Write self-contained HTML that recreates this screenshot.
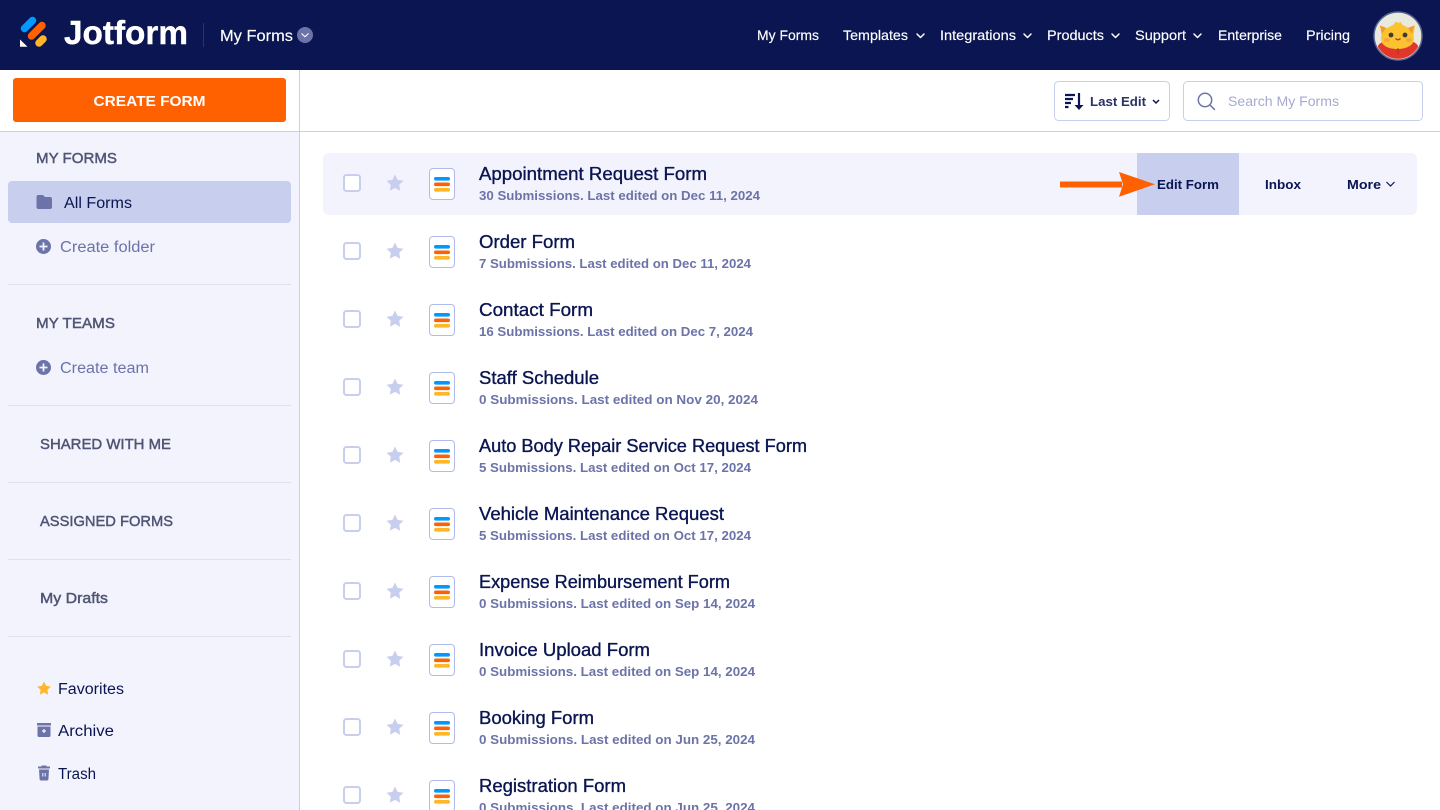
<!DOCTYPE html>
<html lang="en"><head><meta charset="utf-8"><title>My Forms</title>
<style>
html,body{margin:0;padding:0;width:1440px;height:810px;overflow:hidden;background:#fff}
svg{display:block;font-family:"Liberation Sans",sans-serif}
.t{font-size:18px;fill:#0a1551;stroke:#0a1551;stroke-width:.35}
.s{font-size:13px;fill:#6c73a8;font-weight:bold}
.n{font-size:14px;fill:#fff;stroke:#fff;stroke-width:.15}
.h{font-size:15px;fill:#4f5573;stroke:#4f5573;stroke-width:.45}
.l{font-size:15.5px;fill:#0a1551}
.c{font-size:15.5px;fill:#6c73a8}
.a{font-size:13px;fill:#0a1551;font-weight:bold}
.d{fill:none;stroke:#fff;stroke-width:1.5;stroke-linecap:round;stroke-linejoin:round}
</style></head><body>
<svg width="1440" height="810" viewBox="0 0 1440 810" xmlns="http://www.w3.org/2000/svg">
<defs>
<g id="i">
<rect x="344" y="175" width="16" height="16" rx="2.5" fill="#fff" stroke="#c8ceed" stroke-width="2"/>
<path d="M395 174.500l2.600 5.400 5.900.8-4.300 4.100 1 5.900-5.200-2.800-5.200 2.800 1-5.900-4.300-4.100 5.900-.8z" fill="#c8ceed"/>
<rect x="429.500" y="168.500" width="25" height="31" rx="3.500" fill="#fff" stroke="#b1bbe9"/>
<rect x="434" y="177" width="16" height="3.600" rx="1.800" fill="#0099ff"/>
<rect x="434" y="182.500" width="16" height="3.600" rx="1.800" fill="#ff6100"/>
<rect x="434" y="188" width="16" height="3.600" rx="1.800" fill="#ffb629"/>
</g>
</defs>

<!-- top bar -->
<rect width="1440" height="70" fill="#0a1551"/>
<path d="M24.500 28.500L32.500 20.500" stroke="#0099ff" stroke-width="7.500" stroke-linecap="round"/>
<path d="M31.500 36L42 25.500" stroke="#ff6100" stroke-width="7.500" stroke-linecap="round"/>
<path d="M39 43L43 39" stroke="#ffb629" stroke-width="7.500" stroke-linecap="round"/>
<path d="M20 39.500v7.200h7.500z" fill="#fff"/>
<text x="64" y="44" font-size="33" font-weight="bold" fill="#fff" stroke="#fff" stroke-width=".4" textLength="124" lengthAdjust="spacingAndGlyphs">Jotform</text>
<rect x="203" y="23" width="1" height="24" fill="#2a3570"/>
<text x="220" y="41" font-size="15.5" fill="#fff" stroke="#fff" stroke-width=".15" textLength="73" lengthAdjust="spacingAndGlyphs">My Forms</text>
<circle cx="305" cy="35" r="8" fill="#6c73a8"/>
<path d="M301.500 33.500l3.500 3.300 3.500-3.300" fill="none" stroke="#fff" stroke-width="1.100"/>
<text x="757" y="40" class="n" textLength="62" lengthAdjust="spacingAndGlyphs">My Forms</text>
<text x="843" y="40" class="n" textLength="65" lengthAdjust="spacingAndGlyphs">Templates</text>
<path class="d" d="M917 34l3.500 3.500 3.500-3.500"/>
<text x="940" y="40" class="n" textLength="76" lengthAdjust="spacingAndGlyphs">Integrations</text>
<path class="d" d="M1024 34l3.500 3.500 3.500-3.500"/>
<text x="1047" y="40" class="n" textLength="57" lengthAdjust="spacingAndGlyphs">Products</text>
<path class="d" d="M1112 34l3.500 3.500 3.500-3.500"/>
<text x="1135" y="40" class="n" textLength="51" lengthAdjust="spacingAndGlyphs">Support</text>
<path class="d" d="M1194 34l3.500 3.500 3.500-3.500"/>
<text x="1218" y="40" class="n" textLength="64" lengthAdjust="spacingAndGlyphs">Enterprise</text>
<text x="1306" y="40" class="n" textLength="44" lengthAdjust="spacingAndGlyphs">Pricing</text>

<!-- avatar -->
<circle cx="1398" cy="36" r="24" fill="#e9eadf" stroke="#5a638f" stroke-width="1.500"/>
<clipPath id="av"><circle cx="1398" cy="36" r="22.800"/></clipPath>
<g clip-path="url(#av)">
<path d="M1376 62l2-16c1-3 6-5 12-6h16c6 1 11 3 12 6l2 16z" fill="#e0362c"/>
<path d="M1380 25.500l7 2.500 6-3 3-3.500 2 1.500 2.500-1 2 3 6.500 3 6-2.500-1.500 9c1 5 0 9-3 11-4 2.500-8 3.500-13 3.500s-10-1-13-3.500c-3-2-4-6-3-11z" fill="#fcc230"/>
<path d="M1380 25.500l6 2.500-4 6z M1414 25.500l-6 2.500 4 6z" fill="#f39a2e"/>
<circle cx="1391" cy="35" r="2.400" fill="#3d3b33"/><circle cx="1405" cy="35" r="2.400" fill="#3d3b33"/>
<ellipse cx="1387" cy="40" rx="3" ry="2" fill="#f6a63f"/><ellipse cx="1409" cy="40" rx="3" ry="2" fill="#f6a63f"/>
<path d="M1395.500 38.500q2.500 2.500 5 0" fill="none" stroke="#9c4a1a" stroke-width="1.300"/>
<path d="M1398 48v6" stroke="#b32a22" stroke-width="1"/>
</g>

<!-- sidebar -->
<rect x="0" y="70" width="300" height="740" fill="#fff"/>
<rect x="0" y="132" width="299" height="678" fill="#f3f3fe"/>
<rect x="299" y="70" width="1" height="740" fill="#c8ceed"/>
<rect x="300" y="131" width="1140" height="1" fill="#c8ceed"/>
<rect x="0" y="131" width="300" height="1" fill="#c8ceed"/>
<rect x="13" y="78" width="273" height="44" rx="3" fill="#ff6100"/>
<text x="149.500" y="106" font-size="15" font-weight="bold" fill="#fff" text-anchor="middle" textLength="112" lengthAdjust="spacingAndGlyphs">CREATE FORM</text>

<text x="36" y="163" class="h" textLength="81" lengthAdjust="spacingAndGlyphs">MY FORMS</text>
<rect x="8" y="181" width="283" height="42" rx="4" fill="#c8ceed"/>
<path d="M36.500 197a2 2 0 0 1 2-2h4.500l2 2h5a2 2 0 0 1 2 2v8a2 2 0 0 1-2 2h-11.500a2 2 0 0 1-2-2z" fill="#6c73a8"/>
<text x="64" y="208" class="l" textLength="68" lengthAdjust="spacingAndGlyphs">All Forms</text>
<circle cx="43.500" cy="246.500" r="7.500" fill="#6c73a8"/>
<path d="M39.500 246.500h8M43.500 242.500v8" stroke="#f3f3fe" stroke-width="1.800"/>
<text x="60" y="252" class="c" textLength="95" lengthAdjust="spacingAndGlyphs">Create folder</text>
<rect x="8" y="284" width="283" height="1" fill="#dfe0ea"/>
<text x="36" y="328" class="h" textLength="79" lengthAdjust="spacingAndGlyphs">MY TEAMS</text>
<circle cx="43.500" cy="367.500" r="7.500" fill="#6c73a8"/>
<path d="M39.500 367.500h8M43.500 363.500v8" stroke="#f3f3fe" stroke-width="1.800"/>
<text x="60" y="373" class="c" textLength="89" lengthAdjust="spacingAndGlyphs">Create team</text>
<rect x="8" y="405" width="283" height="1" fill="#dfe0ea"/>
<text x="40" y="449" class="h" textLength="131" lengthAdjust="spacingAndGlyphs">SHARED WITH ME</text>
<rect x="8" y="482" width="283" height="1" fill="#dfe0ea"/>
<text x="40" y="526" class="h" textLength="133" lengthAdjust="spacingAndGlyphs">ASSIGNED FORMS</text>
<rect x="8" y="559" width="283" height="1" fill="#dfe0ea"/>
<text x="40" y="603" class="h" textLength="68" lengthAdjust="spacingAndGlyphs">My Drafts</text>
<rect x="8" y="636" width="283" height="1" fill="#dfe0ea"/>

<path d="M44 681.500l2.100 4.400 4.800.7-3.500 3.300.8 4.800-4.200-2.300-4.200 2.300.8-4.800-3.500-3.300 4.800-.7z" fill="#ffb629"/>
<text x="58" y="694" class="l" textLength="66" lengthAdjust="spacingAndGlyphs">Favorites</text>
<rect x="37" y="723" width="14" height="2.500" rx=".5" fill="#6c73a8"/>
<path d="M37.500 726.500h13v9a1.500 1.500 0 0 1-1.500 1.500h-10a1.500 1.500 0 0 1-1.500-1.500z" fill="#6c73a8"/>
<path d="M42 731h4M44 729v4" stroke="#f3f3fe" stroke-width="1.200"/>
<text x="58" y="736" class="l" textLength="56" lengthAdjust="spacingAndGlyphs">Archive</text>
<rect x="38" y="766.500" width="12" height="2" rx=".5" fill="#6c73a8"/>
<rect x="41.500" y="765.500" width="5" height="2" fill="#6c73a8"/>
<path d="M39 769.500h10l-.6 9.500a1.500 1.500 0 0 1-1.500 1.500h-5.800a1.500 1.500 0 0 1-1.500-1.500z" fill="#6c73a8"/>
<path d="M42.800 773v3.500M45.200 773v3.500" stroke="#f3f3fe" stroke-width="1"/>
<text x="58" y="779" class="l" textLength="38" lengthAdjust="spacingAndGlyphs">Trash</text>

<!-- toolbar -->
<rect x="1054.500" y="81.500" width="115" height="39" rx="4" fill="#fff" stroke="#c8ceed"/>
<path d="M1065 95h10M1065 99h8M1065 103h6M1065 107h3.500" stroke="#0a1551" stroke-width="2.300"/>
<path d="M1079 93v14" stroke="#0a1551" stroke-width="2.200"/>
<path d="M1074.500 105h9l-4.500 5z" fill="#0a1551"/>
<text x="1090" y="106" font-size="13" font-weight="bold" fill="#2b3266" textLength="56" lengthAdjust="spacingAndGlyphs">Last Edit</text>
<path d="M1153 100l3 3 3-3" fill="none" stroke="#0a1551" stroke-width="1.500"/>
<rect x="1183.500" y="81.500" width="239" height="39" rx="4" fill="#fff" stroke="#c8ceed"/>
<circle cx="1205" cy="100" r="6.700" fill="none" stroke="#6c73a8" stroke-width="1.500"/>
<path d="M1210 105l4.500 4.500" stroke="#6c73a8" stroke-width="1.500" stroke-linecap="round"/>
<text x="1228" y="106" font-size="14" fill="#a5aad0" textLength="111" lengthAdjust="spacingAndGlyphs">Search My Forms</text>

<!-- first row highlight -->
<rect x="323" y="153" width="1094" height="62" rx="6" fill="#f3f3fe"/>
<rect x="1137" y="153" width="102" height="62" fill="#c8ceed"/>
<rect x="1060" y="181.500" width="62" height="6" fill="#ff6100"/>
<path d="M1119 172l36 12.300-36 12.400 4-12.400z" fill="#ff6100"/>
<text x="1157" y="189" class="a" textLength="62" lengthAdjust="spacingAndGlyphs">Edit Form</text>
<text x="1265" y="189" class="a" textLength="36" lengthAdjust="spacingAndGlyphs">Inbox</text>
<text x="1347" y="189" class="a" textLength="34" lengthAdjust="spacingAndGlyphs">More</text>
<path d="M1386.500 182l4 4 4-4" fill="none" stroke="#0a1551" stroke-width="1.200"/>

<!-- rows -->
<use href="#i"/>
<text x="479" y="180" class="t" textLength="228" lengthAdjust="spacingAndGlyphs">Appointment Request Form</text>
<text x="479" y="200" class="s" textLength="281" lengthAdjust="spacingAndGlyphs">30 Submissions. Last edited on Dec 11, 2024</text>
<use href="#i" y="68"/>
<text x="479" y="248" class="t" textLength="96" lengthAdjust="spacingAndGlyphs">Order Form</text>
<text x="479" y="268" class="s" textLength="272" lengthAdjust="spacingAndGlyphs">7 Submissions. Last edited on Dec 11, 2024</text>
<use href="#i" y="136"/>
<text x="479" y="316" class="t" textLength="114" lengthAdjust="spacingAndGlyphs">Contact Form</text>
<text x="479" y="336" class="s" textLength="274" lengthAdjust="spacingAndGlyphs">16 Submissions. Last edited on Dec 7, 2024</text>
<use href="#i" y="204"/>
<text x="479" y="384" class="t" textLength="120" lengthAdjust="spacingAndGlyphs">Staff Schedule</text>
<text x="479" y="404" class="s" textLength="279" lengthAdjust="spacingAndGlyphs">0 Submissions. Last edited on Nov 20, 2024</text>
<use href="#i" y="272"/>
<text x="479" y="452" class="t" textLength="328" lengthAdjust="spacingAndGlyphs">Auto Body Repair Service Request Form</text>
<text x="479" y="472" class="s" textLength="272" lengthAdjust="spacingAndGlyphs">5 Submissions. Last edited on Oct 17, 2024</text>
<use href="#i" y="340"/>
<text x="479" y="520" class="t" textLength="245" lengthAdjust="spacingAndGlyphs">Vehicle Maintenance Request</text>
<text x="479" y="540" class="s" textLength="272" lengthAdjust="spacingAndGlyphs">5 Submissions. Last edited on Oct 17, 2024</text>
<use href="#i" y="408"/>
<text x="479" y="588" class="t" textLength="251" lengthAdjust="spacingAndGlyphs">Expense Reimbursement Form</text>
<text x="479" y="608" class="s" textLength="276" lengthAdjust="spacingAndGlyphs">0 Submissions. Last edited on Sep 14, 2024</text>
<use href="#i" y="476"/>
<text x="479" y="656" class="t" textLength="171" lengthAdjust="spacingAndGlyphs">Invoice Upload Form</text>
<text x="479" y="676" class="s" textLength="276" lengthAdjust="spacingAndGlyphs">0 Submissions. Last edited on Sep 14, 2024</text>
<use href="#i" y="544"/>
<text x="479" y="724" class="t" textLength="115" lengthAdjust="spacingAndGlyphs">Booking Form</text>
<text x="479" y="744" class="s" textLength="276" lengthAdjust="spacingAndGlyphs">0 Submissions. Last edited on Jun 25, 2024</text>
<use href="#i" y="612"/>
<text x="479" y="792" class="t" textLength="147" lengthAdjust="spacingAndGlyphs">Registration Form</text>
<text x="479" y="812" class="s" textLength="276" lengthAdjust="spacingAndGlyphs">0 Submissions. Last edited on Jun 25, 2024</text>
</svg>
</body></html>
